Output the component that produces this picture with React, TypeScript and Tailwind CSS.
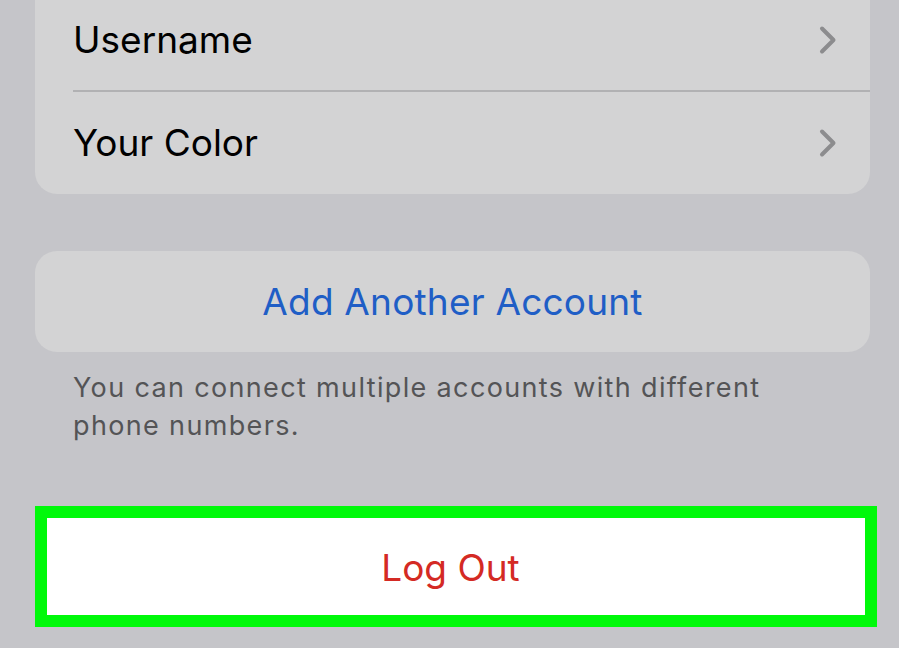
import React from "react";

function Chevron() {
  return (
    <svg width="20" height="30" viewBox="0 0 20 30" fill="none" className="shrink-0">
      <path d="M4 3.5 L15.5 15 L4 26.5" stroke="#8c8c8e" strokeWidth="4" strokeLinecap="round" strokeLinejoin="round" />
    </svg>
  );
}

function Row({ label, last }: { label: string; last?: boolean }) {
  return (
    <div className="pl-[38px]">
      <div className={`flex items-center justify-between h-[102px] pr-[32px] ${last ? "" : "border-b-2 border-[#b1b1b3]"}`}>
        <span className="text-[37px] text-black">{label}</span>
        <Chevron />
      </div>
    </div>
  );
}

export default function App() {
  return (
    <div
      className="w-[899px] h-[648px] overflow-hidden bg-[#c5c5c9] pl-[35px] pr-[29px]"
      style={{ fontFamily: "Inter, 'Liberation Sans', sans-serif" }}
    >
      <div className="-mt-[10px] bg-[#d3d3d4] rounded-b-[22px]">
        <Row label="Username" />
        <Row label="Your Color" last />
      </div>

      <div className="mt-[57px] h-[101px] rounded-[22px] bg-[#d3d3d4] flex items-center justify-center">
        <span className="text-[37px] text-[#1f5ec6] tracking-[0.2px]">Add Another Account</span>
      </div>

      <p className="mt-[17px] pl-[38px] text-[27px] leading-[38px] text-[#545456] tracking-[1.35px]">
        You can connect multiple accounts with different
        <br />
        phone numbers.
      </p>

      <div className="mt-[61px] w-[842px] h-[121px] border-[12px] border-[#00f90a] bg-white flex items-center justify-center pr-[11px] pt-[3px]">
        <span className="text-[37px] text-[#d42a24]">Log Out</span>
      </div>
    </div>
  );
}
